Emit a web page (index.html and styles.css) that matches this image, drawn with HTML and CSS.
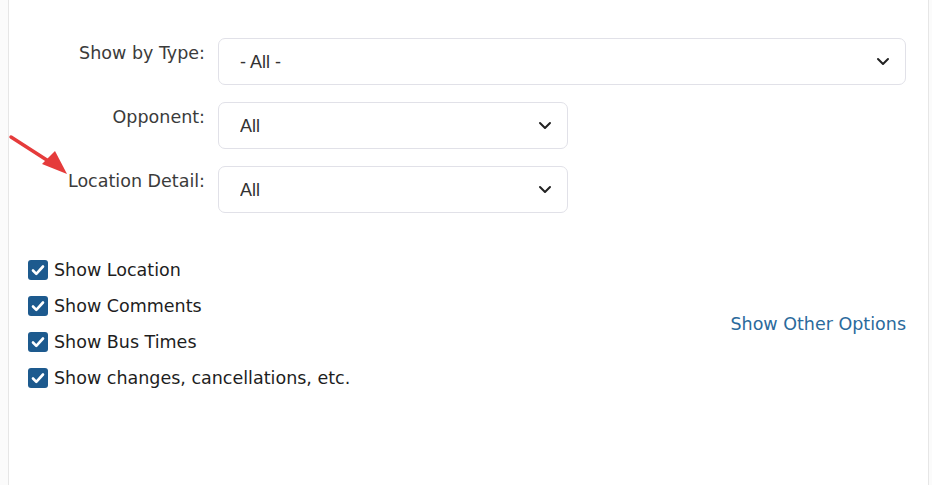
FILE: index.html
```html
<!DOCTYPE html>
<html lang="en">
<head>
    <meta charset="UTF-8">
    <meta name="viewport" content="width=device-width, initial-scale=1.0">
    <title>Schedule Filters</title>
    <link rel="stylesheet" href="styles.css">
</head>
<body>
    <div class="panel">
        <!-- annotation arrow -->
        <svg class="arrow" width="70" height="180" viewBox="0 0 70 180">
            <line x1="10" y1="137" x2="52" y2="164" stroke="#e53b3b" stroke-width="3.5" stroke-linecap="round"/>
            <polygon points="41,164 54,151 66,174" fill="#e53b3b"/>
        </svg>

        <div class="form-row">
            <label class="form-label" for="typeSelect">Show by Type:</label>
            <div class="select-wrap wide">
                <select id="typeSelect" class="form-select">
                    <option>- All -</option>
                </select>
                <svg class="chevron" width="14" height="9" viewBox="0 0 14 9"><path d="M2 2l5 5 5-5" fill="none" stroke="#222" stroke-width="2" stroke-linecap="round" stroke-linejoin="round"/></svg>
            </div>
        </div>

        <div class="form-row">
            <label class="form-label" for="opponentSelect">Opponent:</label>
            <div class="select-wrap">
                <select id="opponentSelect" class="form-select">
                    <option>All</option>
                </select>
                <svg class="chevron" width="14" height="9" viewBox="0 0 14 9"><path d="M2 2l5 5 5-5" fill="none" stroke="#222" stroke-width="2" stroke-linecap="round" stroke-linejoin="round"/></svg>
            </div>
        </div>

        <div class="form-row">
            <label class="form-label" for="locationSelect">Location Detail:</label>
            <div class="select-wrap">
                <select id="locationSelect" class="form-select">
                    <option>All</option>
                </select>
                <svg class="chevron" width="14" height="9" viewBox="0 0 14 9"><path d="M2 2l5 5 5-5" fill="none" stroke="#222" stroke-width="2" stroke-linecap="round" stroke-linejoin="round"/></svg>
            </div>
        </div>

        <!-- Display options -->
        <div class="options">
            <ul class="checks">
                <li><span class="box"><svg width="14" height="12" viewBox="0 0 14 12"><path d="M2 6.5l3.3 3.3L12 2.5" fill="none" stroke="#fff" stroke-width="2.6" stroke-linecap="round" stroke-linejoin="round"/></svg></span>Show Location</li>
                <li><span class="box"><svg width="14" height="12" viewBox="0 0 14 12"><path d="M2 6.5l3.3 3.3L12 2.5" fill="none" stroke="#fff" stroke-width="2.6" stroke-linecap="round" stroke-linejoin="round"/></svg></span>Show Comments</li>
                <li><span class="box"><svg width="14" height="12" viewBox="0 0 14 12"><path d="M2 6.5l3.3 3.3L12 2.5" fill="none" stroke="#fff" stroke-width="2.6" stroke-linecap="round" stroke-linejoin="round"/></svg></span>Show Bus Times</li>
                <li><span class="box"><svg width="14" height="12" viewBox="0 0 14 12"><path d="M2 6.5l3.3 3.3L12 2.5" fill="none" stroke="#fff" stroke-width="2.6" stroke-linecap="round" stroke-linejoin="round"/></svg></span>Show changes, cancellations, etc.</li>
            </ul>
            <a class="other-link" href="#">Show Other Options</a>
        </div>
    </div>
</body>
</html>
```

FILE: styles.css
```css
body {
    margin: 0 0 0 8px;
    background-color: #fbfbfb;
    font-family: "DejaVu Sans", Verdana, sans-serif;
    font-size: 17.5px;
    color: #333;
    overflow: hidden;
}
.panel {
    position: relative;
    width: 921px;
    min-height: 600px;
    background-color: #fff;
    border-left: 1px solid #e6e6e6;
    border-right: 1px solid #e6e6e6;
    padding: 38px 22px 0 19px;
    box-sizing: border-box;
}
.arrow {
    position: absolute;
    left: -8px;
    top: 0;
}
.form-row {
    display: flex;
    align-items: flex-start;
    margin-bottom: 17px;
}
.form-label {
    width: 177px;
    margin-right: 13px;
    padding-top: 2px;
    text-align: right;
    line-height: 26px;
    color: #3b3b3b;
}
.select-wrap {
    position: relative;
    width: 350px;
}
.select-wrap.wide {
    flex: 1;
}
.form-select {
    appearance: none;
    -webkit-appearance: none;
    width: 100%;
    height: 47px;
    padding: 0 40px 0 21px;
    border: 1.5px solid #e1e1e8;
    border-radius: 7px;
    background-color: #fff;
    font-family: "Liberation Sans", Arial, sans-serif;
    font-size: 18px;
    color: #333;
}
.chevron {
    position: absolute;
    right: 16px;
    top: 19px;
    pointer-events: none;
}
.options {
    display: flex;
    align-items: center;
    justify-content: space-between;
    margin-top: 39px;
}
.checks {
    list-style: none;
    margin: 0;
    padding: 0;
}
.checks li {
    display: flex;
    align-items: center;
    height: 36px;
    color: #1e1e1e;
}
.box {
    display: flex;
    align-items: center;
    justify-content: center;
    width: 20px;
    height: 20px;
    margin-right: 6px;
    border-radius: 3px;
    background-color: #1d5a8e;
}
.other-link {
    color: #2b6a9c;
    text-decoration: none;
}
```
